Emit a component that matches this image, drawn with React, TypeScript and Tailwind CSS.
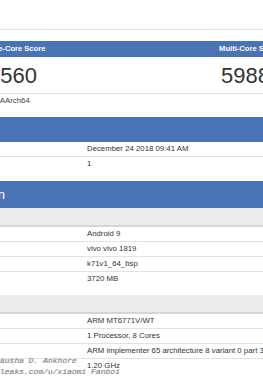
const resultRows = [
  ["Upload Date", "December 24 2018 09:41 AM"],
  ["Views", "1"],
];

const systemRows = [
  ["Operating System", "Android 9"],
  ["Model", "vivo vivo 1819"],
  ["Motherboard", "k71v1_64_bsp"],
  ["Memory", "3720 MB"],
];

const processorRows = [
  ["Name", "ARM MT6771V/WT"],
  ["Topology", "1 Processor, 8 Cores"],
  ["Identifier", "ARM implementer 65 architecture 8 variant 0 part 3337 revision 4"],
  ["Base Frequency", "1.20 GHz"],
];

function Row({ label, value }: { label: string; value: string }) {
  return (
    <div className="flex leading-[14px] text-[7.8px] text-[#333]">
      <div className="w-[201px] shrink-0 px-[6px] font-bold">{label}</div>
      <div className="pl-[4px] whitespace-nowrap">{value}</div>
    </div>
  );
}

function Rows({ rows }: { rows: string[][] }) {
  return (
    <div className="divide-y divide-[#e2e2e2]">
      {rows.map(([l, v]) => (
        <Row key={l} label={l} value={v} />
      ))}
    </div>
  );
}

function SectionHead({ title, h }: { title: string; h: string }) {
  return (
    <div className={`flex items-center bg-[#4a73b6] pl-[11px] text-[13px] text-white ${h}`}>
      {title}
    </div>
  );
}

function SubHead({ title }: { title: string }) {
  return (
    <div className="flex h-[19px] items-center border-b-2 border-[#d5d5d5] bg-[#ececec] px-[6px] text-[7.8px] font-bold text-[#333]">
      {title}
    </div>
  );
}

export default function App() {
  return (
    <div className="relative h-[389px] w-[263px] overflow-hidden bg-white font-['Liberation_Sans',Arial,sans-serif]">
      <div className="ml-[-118px] w-[496px]">
        <div className="h-[30px] border-b border-[#e4e4e4]" />

        <div className="mx-[13px] mt-[11px]">
          <div className="grid h-[16px] grid-cols-2 items-center bg-[#4a73b6] text-center text-[7.6px] font-bold text-white">
            <div>Single-Core Score</div>
            <div className="pl-[4px]">Multi-Core Score</div>
          </div>
          <div className="grid h-[37px] grid-cols-2 items-center border-b border-[#e2e2e2] text-center text-[22px] text-[#333]">
            <div>1560</div>
            <div className="pr-[4px]">5988</div>
          </div>
          <div className="grid h-[14px] grid-cols-2 items-center text-center text-[7.8px] text-[#444]">
            <div className="pr-[24px]">Android AArch64</div>
            <div />
          </div>
        </div>

        <div className="mt-[9px]">
          <SectionHead title="Result Information" h="h-[25px]" />
          <Rows rows={resultRows} />
        </div>

        <div className="mt-[10px]">
          <SectionHead title="System Information" h="h-[27px]" />
          <SubHead title="System Information" />
          <Rows rows={systemRows} />
          <div className="mt-[9px]">
            <SubHead title="Processor Information" />
            <Rows rows={processorRows} />
          </div>
        </div>
      </div>

      <div className="pointer-events-none absolute left-[-24px] top-[355px] font-['Liberation_Mono',monospace] text-[8px] italic leading-[11px] text-[#7a7a7a] [text-shadow:1px_1px_0_#ffffff,-1px_0_0_#d8d8d8]">
        <div>By: Pausha D. Ankhore</div>
        <div>slashleaks.com/u/xiaomi Fanboi</div>
      </div>
    </div>
  );
}
